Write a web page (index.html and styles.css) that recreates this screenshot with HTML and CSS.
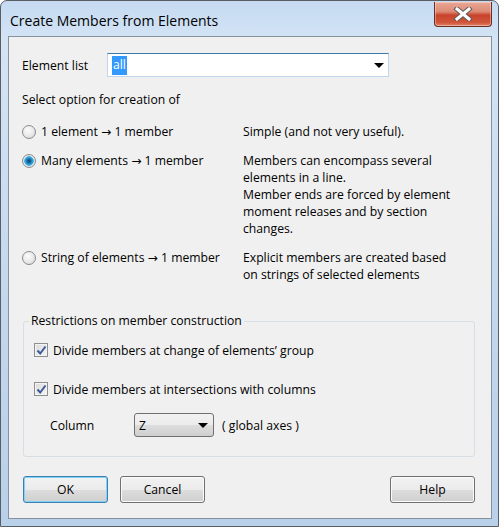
FILE: index.html
```html
<!DOCTYPE html>
<html lang="en">

<head>
    <meta charset="UTF-8">
    <meta name="viewport" content="width=device-width, initial-scale=1.0">
    <title>Create Members from Elements</title>
    <link rel="stylesheet" href="styles.css">
</head>

<body>
    <div class="window">
        <div class="titlebar">
            <span class="title">Create Members from Elements</span>
            <a href="javascript:;" class="close">
                <svg width="20" height="14" viewBox="0 0 20 14">
                    <path d="M4 2 L16 12 M16 2 L4 12" stroke="#5e5e5e" stroke-width="5" stroke-linecap="square" />
                    <path d="M4 2 L16 12 M16 2 L4 12" stroke="#ffffff" stroke-width="3" stroke-linecap="square" />
                </svg>
            </a>
        </div>
        <div class="client">
            <div class="field_row">
                <label class="field_label">Element list</label>
                <div class="combo combo_edit">
                    <span class="combo_sel">all</span>
                    <span class="arrow"></span>
                </div>
            </div>
            <p class="prompt">Select option for creation of</p>

            <!-- 三个创建方式 -->
            <div class="option first">
                <label class="radio"><span class="radio_box"></span>1 element → 1 member</label>
                <p class="desc">Simple (and not very useful).</p>
            </div>
            <div class="option">
                <label class="radio"><span class="radio_box checked"></span>Many elements → 1 member</label>
                <p class="desc">Members can encompass several<br>elements in a line.<br>Member ends are forced by element<br>moment releases and by section<br>changes.</p>
            </div>
            <div class="option">
                <label class="radio"><span class="radio_box"></span>String of elements → 1 member</label>
                <p class="desc">Explicit members are created based<br>on strings of selected elements</p>
            </div>

            <fieldset class="group">
                <legend>Restrictions on member construction</legend>
                <label class="check first">
                    <span class="check_box">
                        <svg width="11" height="11" viewBox="0 0 11 11">
                            <path d="M1.5 5.5 L4.2 8.5 L9.5 1.5" fill="none" stroke="#3c5a98" stroke-width="2" />
                        </svg>
                    </span>Divide members at change of elements’ group
                </label>
                <label class="check">
                    <span class="check_box">
                        <svg width="11" height="11" viewBox="0 0 11 11">
                            <path d="M1.5 5.5 L4.2 8.5 L9.5 1.5" fill="none" stroke="#3c5a98" stroke-width="2" />
                        </svg>
                    </span>Divide members at intersections with columns
                </label>
                <div class="column_row">
                    <span class="column_label">Column</span>
                    <div class="combo combo_drop">Z<span class="arrow"></span></div>
                    <span>( global axes )</span>
                </div>
            </fieldset>

            <div class="buttons">
                <div class="button_left">
                    <a href="javascript:;" class="btn btn_default">OK</a>
                    <a href="javascript:;" class="btn">Cancel</a>
                </div>
                <a href="javascript:;" class="btn">Help</a>
            </div>
        </div>
    </div>
</body>

</html>
```

FILE: styles.css
```css
* {
    margin: 0;
    padding: 0;
    box-sizing: border-box;
}

body {
    background-color: #fff;
    font-family: "Open Sans", "DejaVu Sans", sans-serif;
    font-size: 12.2px;
    color: #000;
}

.window {
    display: flex;
    flex-direction: column;
    width: 499px;
    height: 527px;
    padding: 0 6px 7px 7px;
    border: 1px solid #5a5e63;
    border-radius: 7px 7px 0 0;
    background: linear-gradient(to bottom, #c5daf1 0px, #d4e4f5 40px, #c3d8ee 300px, #b9d0ea 527px);
}

.titlebar {
    display: flex;
    align-items: flex-start;
    height: 35px;
}

.title {
    padding: 10px 0 0 2px;
    font-size: 14px;
    line-height: 20px;
    color: #000;
}

.close {
    display: flex;
    justify-content: center;
    align-items: center;
    width: 58px;
    height: 25px;
    margin: 1px 0 0 auto;
    border: 1px solid #6b2f22;
    border-top: none;
    border-radius: 0 0 4px 4px;
    background: linear-gradient(to bottom, #e8a897 0%, #dd8a74 40%, #c8432b 55%, #d0553a 85%, #e0836a 100%);
    box-shadow: inset 0 0 0 1px rgba(255, 255, 255, .35);
}

.client {
    flex: 1;
    padding: 0 0 0 13px;
    border: 1px solid #87929e;
    background-color: #f0f0f0;
}

.field_row {
    display: flex;
    align-items: center;
    margin-top: 16px;
    height: 24px;
}

.field_label {
    width: 85px;
}

.combo {
    position: relative;
    display: flex;
    align-items: center;
    height: 24px;
}

.combo_edit {
    width: 282px;
    padding-left: 4px;
    border: 1px solid #bfd5ea;
    border-top-color: #3d7bad;
    background-color: #fff;
}

.combo_sel {
    padding: 1px 1px 2px;
    background-color: #3399ff;
    color: #fff;
    line-height: 16px;
}

.arrow {
    position: absolute;
    right: 4px;
    top: 9px;
    width: 0;
    height: 0;
    border-left: 5px solid transparent;
    border-right: 5px solid transparent;
    border-top: 5px solid #000;
}

.prompt {
    margin-top: 15px;
    line-height: 16px;
}

.option {
    display: grid;
    grid-template-columns: 221px 1fr;
    margin-top: 12px;
    line-height: 17px;
}

.option.first {
    margin-top: 15px;
}

.radio {
    display: flex;
    align-items: center;
    height: 17px;
}

.radio_box {
    width: 14px;
    height: 14px;
    margin-right: 5px;
    border: 1px solid #8b8b8b;
    border-radius: 50%;
    background: radial-gradient(circle at 40% 35%, #fbfbfb 0%, #ececec 45%, #d2d2d2 100%);
}

.radio_box.checked {
    background: radial-gradient(circle at 50% 50%, #0b3c62 0px, #1a6fa6 2px, #3aa8e0 4px, #4cbff0 4.6px, #e7e7e7 5px, #d6d6d6 100%);
}

.group {
    width: 452px;
    margin: 30px 0 0 1px;
    padding: 0 0 19px 10px;
    border: 1px solid #d5dfe5;
    border-radius: 3px;
}

.group legend {
    margin-left: -5px;
    padding: 0 2px;
    line-height: 16px;
}

.check {
    display: flex;
    align-items: center;
    height: 16px;
    margin-top: 23px;
}

.check.first {
    margin-top: 13px;
}

.check_box {
    display: flex;
    justify-content: center;
    align-items: center;
    width: 14px;
    height: 14px;
    margin-right: 5px;
    border: 1px solid #8e8f8f;
    background: linear-gradient(to bottom right, #dcdcdc, #f5f5f5);
    box-shadow: inset 0 0 0 1px #f4f4f4;
}

.column_row {
    display: flex;
    align-items: center;
    margin-top: 16px;
    height: 24px;
}

.column_label {
    width: 100px;
    padding-left: 16px;
}

.combo_drop {
    width: 80px;
    margin-right: 8px;
    padding-left: 4px;
    border: 1px solid #707070;
    border-radius: 3px;
    background: linear-gradient(to bottom, #f2f2f2 0%, #ebebeb 50%, #dddddd 51%, #cfcfcf 100%);
}

.combo_drop .arrow {
    right: 5px;
}

.buttons {
    display: flex;
    justify-content: space-between;
    width: 452px;
    margin: 19px 0 0 1px;
}

.button_left {
    display: flex;
    gap: 12px;
}

.btn {
    display: flex;
    justify-content: center;
    align-items: center;
    width: 85px;
    height: 27px;
    border: 1px solid #707070;
    border-radius: 3px;
    background: linear-gradient(to bottom, #f2f2f2 0%, #ebebeb 50%, #dddddd 51%, #cfcfcf 100%);
    box-shadow: inset 0 0 0 1px #fbfbfb;
    color: #000;
    text-decoration: none;
}

.btn_default {
    border-color: #3c7fb1;
    box-shadow: inset 0 0 0 1px #7fd3f5;
}
```
